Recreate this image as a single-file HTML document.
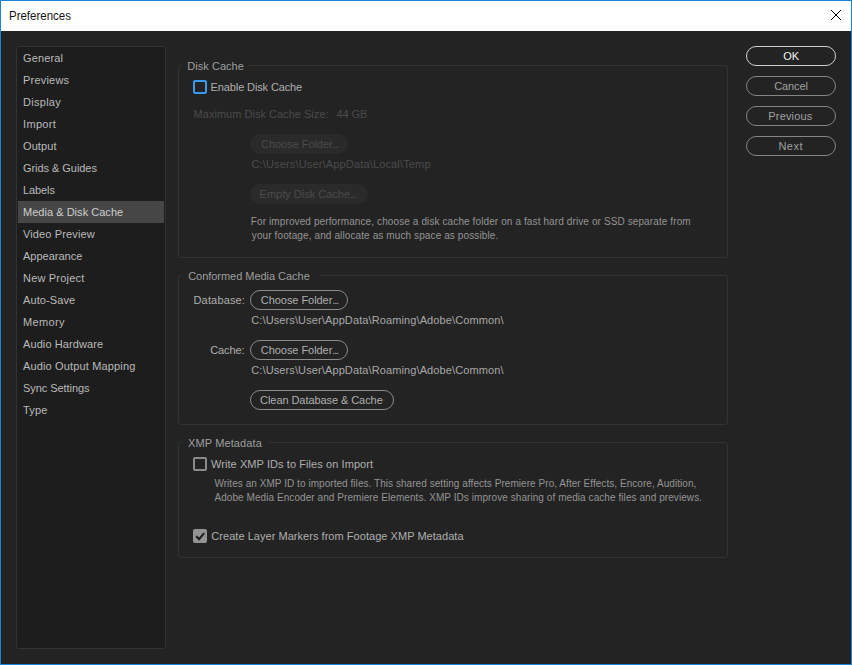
<!DOCTYPE html>
<html><head><meta charset="utf-8">
<style>
*{box-sizing:border-box;margin:0;padding:0}
html,body{width:852px;height:665px;overflow:hidden;background:#232323}
body{position:relative;font-family:"Liberation Sans",sans-serif;color:#c0c0c0}
.abs{position:absolute}
.t{position:absolute;white-space:pre;line-height:20px;height:20px;font-size:11px}
#frame{position:absolute;left:0;top:0;width:852px;height:665px;border:1px solid #1883d7}
#title{position:absolute;left:1px;top:1px;width:850px;height:30px;background:#fff}
#tline{position:absolute;left:1px;top:31px;width:850px;height:1px;background:#232323}
#side{position:absolute;left:16px;top:46px;width:150px;height:603px;background:#1d1d1d;border:1px solid #333;border-radius:3px}
.it{position:absolute;left:23px;font-size:11px;color:#bababa;white-space:pre;line-height:22px;height:22px}
#sel{position:absolute;left:18px;top:201px;width:146px;height:22px;background:#464646}
.grp{position:absolute;border:1px solid #323232;border-radius:3px}
.gap{position:absolute;height:4px;background:#232323}
.btn{position:absolute;height:20px;border:1px solid #8a8a8a;border-radius:10px}
.dbtn{position:absolute;height:20px;background:#2a2a2a;border-radius:10px}
.cb{position:absolute;width:14px;height:14px;border:2px solid #8a8a8a;border-radius:2px}
.leg{color:#9e9e9e}
.lab{color:#afafaf}
.dis{color:#4b4b4b}
.par{color:#949494;font-size:10px}
.pth{color:#a8a8a8}
.bt{color:#afafaf}
.rb{color:#a0a0a0}
</style></head><body>
<div id="title"></div>
<div id="tline"></div>
<div class="t" style="left:9px;top:6px;font-size:12px;transform:scaleX(0.957);transform-origin:0 0;color:#141414">Preferences</div>
<svg class="abs" style="left:0;top:0" width="852" height="32" shape-rendering="crispEdges"><path d="M831 10h1v1h-1zM840 10h1v1h-1zM832 11h1v1h-1zM839 11h1v1h-1zM833 12h1v1h-1zM838 12h1v1h-1zM834 13h1v1h-1zM837 13h1v1h-1zM835 14h1v1h-1zM836 14h1v1h-1zM836 15h1v1h-1zM835 15h1v1h-1zM837 16h1v1h-1zM834 16h1v1h-1zM838 17h1v1h-1zM833 17h1v1h-1zM839 18h1v1h-1zM832 18h1v1h-1zM840 19h1v1h-1zM831 19h1v1h-1z" fill="#000"/></svg>

<div id="side"></div>
<div id="sel"></div>
<div class="it" style="top:47px;letter-spacing:0.15px">General</div>
<div class="it" style="top:69px;letter-spacing:0.2px">Previews</div>
<div class="it" style="top:91px;letter-spacing:0.28px">Display</div>
<div class="it" style="top:113px;letter-spacing:0.34px">Import</div>
<div class="it" style="top:135px;letter-spacing:0.1px">Output</div>
<div class="it" style="top:157px;letter-spacing:-0.05px">Grids &amp; Guides</div>
<div class="it" style="top:179px;letter-spacing:-0.1px">Labels</div>
<div class="it" style="top:201px;color:#cecece;letter-spacing:0.03px">Media &amp; Disk Cache</div>
<div class="it" style="top:223px;letter-spacing:0.13px">Video Preview</div>
<div class="it" style="top:245px;letter-spacing:0px">Appearance</div>
<div class="it" style="top:267px;letter-spacing:0.19px">New Project</div>
<div class="it" style="top:289px;letter-spacing:0.09px">Auto-Save</div>
<div class="it" style="top:311px;letter-spacing:0.38px">Memory</div>
<div class="it" style="top:333px;letter-spacing:0.1px">Audio Hardware</div>
<div class="it" style="top:355px;letter-spacing:0.15px">Audio Output Mapping</div>
<div class="it" style="top:377px;letter-spacing:-0.06px">Sync Settings</div>
<div class="it" style="top:399px;letter-spacing:0.2px">Type</div>

<!-- Group 1 -->
<div class="grp" style="left:178px;top:65px;width:550px;height:193px"></div>
<div class="gap" style="left:182px;top:63px;width:67px"></div>
<div class="t leg" style="left:187.2px;top:56px;letter-spacing:0.05px">Disk Cache</div>
<div class="cb" style="left:193px;top:80px;border-color:#3a9af0"></div>
<div class="t lab" style="left:210.6px;top:77px;letter-spacing:-0.12px">Enable Disk Cache</div>
<div class="t dis" style="left:193.6px;top:104px;letter-spacing:0.02px">Maximum Disk Cache Size:</div>
<div class="t dis" style="left:336.4px;top:104px;letter-spacing:-0.05px">44 GB</div>
<div class="dbtn" style="left:250px;top:134px;width:98px"></div>
<div class="t dis" style="left:261.1px;top:134px;letter-spacing:-0.05px">Choose Folder<span style="letter-spacing:-1.2px">...</span></div>
<div class="t dis" style="left:251.5px;top:154px;letter-spacing:0.155px">C:\Users\User\AppData\Local\Temp</div>
<div class="dbtn" style="left:250px;top:184px;width:118px"></div>
<div class="t dis" style="left:259.6px;top:184px">Empty Disk Cache<span style="letter-spacing:-1.2px">...</span></div>
<div class="t par" style="left:250.8px;top:212px;letter-spacing:0.11px">For improved performance, choose a disk cache folder on a fast hard drive or SSD separate from</div>
<div class="t par" style="left:251.8px;top:226px;letter-spacing:0.11px">your footage, and allocate as much space as possible.</div>

<!-- Group 2 -->
<div class="grp" style="left:178px;top:275px;width:550px;height:150px"></div>
<div class="gap" style="left:182px;top:273px;width:138px"></div>
<div class="t leg" style="left:188.2px;top:266px;letter-spacing:-0.035px">Conformed Media Cache</div>
<div class="t lab" style="left:193.5px;top:290px;letter-spacing:0.16px">Database:</div>
<div class="btn" style="left:250px;top:290px;width:98px"></div>
<div class="t bt" style="left:260.8px;top:290px;letter-spacing:-0.05px">Choose Folder<span style="letter-spacing:-1.2px">...</span></div>
<div class="t pth" style="left:251.3px;top:310px;letter-spacing:0.11px">C:\Users\User\AppData\Roaming\Adobe\Common\</div>
<div class="t lab" style="left:210.2px;top:340px;letter-spacing:-0.12px">Cache:</div>
<div class="btn" style="left:250px;top:340px;width:98px"></div>
<div class="t bt" style="left:260.8px;top:340px;letter-spacing:-0.05px">Choose Folder<span style="letter-spacing:-1.2px">...</span></div>
<div class="t pth" style="left:251.3px;top:360px;letter-spacing:0.11px">C:\Users\User\AppData\Roaming\Adobe\Common\</div>
<div class="btn" style="left:250px;top:390px;width:144px"></div>
<div class="t bt" style="left:260.1px;top:390px;letter-spacing:-0.07px">Clean Database &amp; Cache</div>

<!-- Group 3 -->
<div class="grp" style="left:178px;top:442px;width:550px;height:116px"></div>
<div class="gap" style="left:182px;top:440px;width:87px"></div>
<div class="t leg" style="left:188px;top:433px;letter-spacing:0.11px">XMP Metadata</div>
<div class="cb" style="left:193px;top:457px"></div>
<div class="t lab" style="left:210.9px;top:454px;letter-spacing:0.08px">Write XMP IDs to Files on Import</div>
<div class="t par" style="left:214.4px;top:474px;letter-spacing:0.05px">Writes an XMP ID to imported files. This shared setting affects Premiere Pro, After Effects, Encore, Audition,</div>
<div class="t par" style="left:214.4px;top:488px;letter-spacing:0.07px">Adobe Media Encoder and Premiere Elements. XMP IDs improve sharing of media cache files and previews.</div>
<div class="cb" style="left:193px;top:529px;background:#939393;border-color:#939393"></div>
<svg class="abs" style="left:193px;top:529px" width="14" height="14" viewBox="0 0 14 14"><path d="M3.2 7.3L6 10.1L11.2 4.1" stroke="#1e1e1e" stroke-width="2.1" fill="none"/></svg>
<div class="t lab" style="left:211.3px;top:526px;letter-spacing:0.04px">Create Layer Markers from Footage XMP Metadata</div>

<!-- Right buttons -->
<div class="btn" style="left:746px;top:46px;width:90px;border-color:#d0d0d0"></div>
<div class="t" style="left:783.2px;top:46px;letter-spacing:0.1px;color:#f2f2f2">OK</div>
<div class="btn" style="left:746px;top:76px;width:90px;border-color:#858585"></div>
<div class="t rb" style="left:774.3px;top:76px;letter-spacing:-0.12px">Cancel</div>
<div class="btn" style="left:746px;top:106px;width:90px;border-color:#858585"></div>
<div class="t rb" style="left:768.3px;top:106px;letter-spacing:0.17px">Previous</div>
<div class="btn" style="left:746px;top:136px;width:90px;border-color:#858585"></div>
<div class="t rb" style="left:778.4px;top:136px;letter-spacing:0.5px">Next</div>

<div id="frame"></div>
</body></html>
